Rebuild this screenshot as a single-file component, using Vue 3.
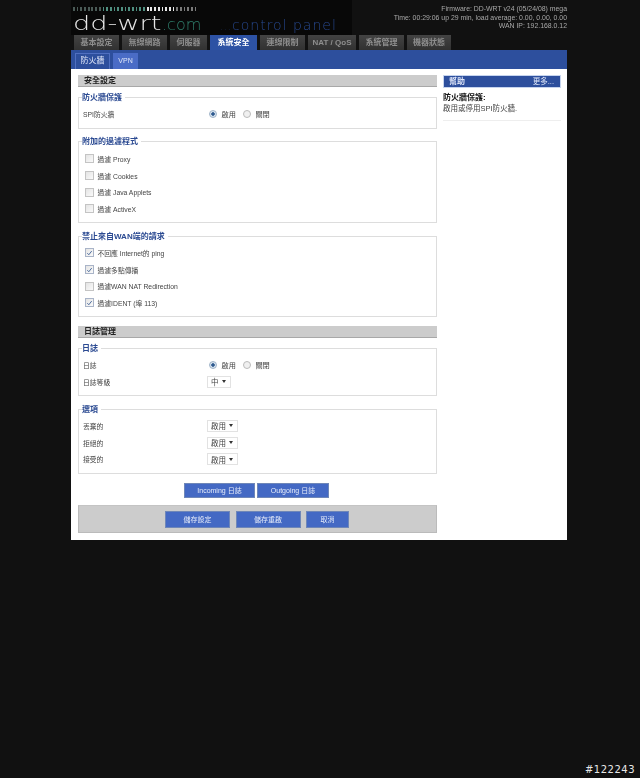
<script setup>
const ticks = Array.from({ length: 34 }, (_, i) => {
  if (i < 8) return '#4a5a56'
  if (i < 20) return '#4f8f80'
  if (i < 28) return '#e8e8e8'
  return '#7a7a7a'
})
const tabs = [
  { t: '基本設定', w: 45 }, { t: '無線網路', w: 45 }, { t: '伺服器', w: 37 },
  { t: '系統安全', w: 47, on: true }, { t: '連線限制', w: 45 }, { t: 'NAT / QoS', w: 48 },
  { t: '系統管理', w: 45 }, { t: '機器狀態', w: 44 },
]
const filters = ['Proxy', 'Cookies', 'Java Applets', 'ActiveX']
const wan = [
  { t: '不回應 Internet的 ping', on: true }, { t: '過濾多點傳播', on: true },
  { t: '過濾WAN NAT Redirection', on: false }, { t: '過濾IDENT (埠 113)', on: true },
]
const opts = ['丟棄的', '拒絕的', '接受的']
</script>

<template>
  <div class="page">
    <div class="wrap">
      <header class="top">
        <div class="logo">
          <div class="ticks">
            <i v-for="(c, i) in ticks" :key="i" :style="{ background: c }"></i>
          </div>
          <div class="brand">
            <span class="ddbox"><span class="dd">dd-wrt</span></span><span class="com">.com</span>
            <span class="cp"><span class="dots">...</span>control panel</span>
          </div>
        </div>
        <div class="info">
          <div>Firmware: DD-WRT v24 (05/24/08) mega</div>
          <div>Time: 00:29:06 up 29 min, load average: 0.00, 0.00, 0.00</div>
          <div>WAN IP: 192.168.0.12</div>
        </div>
      </header>
      <nav class="tabs">
        <span v-for="tab in tabs" :key="tab.t" class="tab" :class="{ on: tab.on }" :style="{ width: tab.w + 'px' }">{{ tab.t }}</span>
      </nav>
      <div class="subbar">
        <span class="sub cur">防火牆</span>
        <span class="sub vpn">VPN</span>
      </div>
      <main class="body">
        <section class="left">
          <h2 class="head">安全設定</h2>
          <fieldset class="fs f1">
            <legend>防火牆保護</legend>
            <div class="row">
              <span class="lab">SPI防火牆</span>
              <span class="radio on"></span><span class="rt">啟用</span>
              <span class="radio"></span><span class="rt">關閉</span>
            </div>
          </fieldset>
          <fieldset class="fs f2">
            <legend>附加的過濾程式</legend>
            <div v-for="f in filters" :key="f" class="row chk">
              <span class="box"></span><span>過濾 {{ f }}</span>
            </div>
          </fieldset>
          <fieldset class="fs f3">
            <legend>禁止來自WAN端的請求</legend>
            <div v-for="w in wan" :key="w.t" class="row chk">
              <span class="box" :class="{ tick: w.on }">
                <svg v-if="w.on" viewBox="0 0 8 8" width="8" height="8"><path d="M1.5 4.2 3.2 6 6.5 1.8" fill="none" stroke="#4a6a9c" stroke-width="1.1" /></svg>
              </span><span>{{ w.t }}</span>
            </div>
          </fieldset>
          <h2 class="head h2">日誌管理</h2>
          <fieldset class="fs f4">
            <legend>日誌</legend>
            <div class="row">
              <span class="lab">日誌</span>
              <span class="radio on"></span><span class="rt">啟用</span>
              <span class="radio"></span><span class="rt">關閉</span>
            </div>
            <div class="row">
              <span class="lab sel-lab">日誌等級</span>
              <span class="sel small">中<b></b></span>
            </div>
          </fieldset>
          <fieldset class="fs f5">
            <legend>選項</legend>
            <div v-for="o in opts" :key="o" class="row">
              <span class="lab sel-lab">{{ o }}</span>
              <span class="sel">啟用<b></b></span>
            </div>
          </fieldset>
          <div class="logbtns">
            <span class="btn b1">Incoming 日誌</span>
            <span class="btn b2">Outgoing 日誌</span>
          </div>
          <div class="actions">
            <span class="btn a1">儲存設定</span>
            <span class="btn a1">儲存重啟</span>
            <span class="btn a2">取消</span>
          </div>
        </section>
        <aside class="help">
          <div class="hhead"><b>幫助</b><span>更多...</span></div>
          <div class="htitle">防火牆保護:</div>
          <div class="htext">啟用或停用SPI防火牆.</div>
        </aside>
      </main>
    </div>
    <span class="mark">#122243</span>
  </div>
</template>

<style scoped>
.page {
  position: relative;
  height: 778px;
  background: #111;
  overflow: hidden;
  font-family: "Liberation Sans", "Noto Sans CJK TC", sans-serif;
  font-size: 7px;
  color: #444;
}
.wrap { margin-left: 71px; width: 496px; filter: blur(0.4px); }
.top { display: flex; justify-content: space-between; height: 35px; }
.logo {
  width: 281px;
  height: 35px;
  background: #080808;
  box-sizing: border-box;
  padding: 7px 0 0 2px;
}
.ticks { display: flex; gap: 1.9px; height: 4px; }
.ticks i { width: 1.8px; height: 4px; display: block; }
.brand { display: flex; align-items: baseline; height: 21px; margin-top: 2px; white-space: nowrap; }
.ddbox { display: inline-block; width: 89px; }
.dd {
  display: inline-block;
  font-family: "DejaVu Sans", sans-serif;
  font-weight: 200;
  font-size: 20px;
  line-height: 21px;
  color: #e6e6e6;
  transform: scaleX(1.36);
  transform-origin: left bottom;
}
.com {
  font-family: "DejaVu Sans", sans-serif;
  font-size: 16px;
  font-weight: 200;
  color: #2f7f6c;
  width: 39px;
}
.cp {
  font-family: "DejaVu Sans", sans-serif;
  font-size: 14px;
  font-weight: 200;
  color: #27488f;
  letter-spacing: 1px;
  margin-left: 19px;
}
.dots { font-size: 9px; display: inline-block; width: 12px; }
.info {
  text-align: right;
  color: #a9a9a9;
  font-size: 6.9px;
  line-height: 8.6px;
  padding-top: 5px;
  white-space: nowrap;
  font-family: "Liberation Sans", sans-serif;
}
.tabs { display: flex; gap: 3px; padding-left: 3px; height: 15px; }
.tab {
  box-sizing: border-box;
  background: linear-gradient(#434343, #313131);
  color: #8e8e8e;
  font-size: 8px;
  font-weight: 700;
  text-align: center;
  line-height: 16px;
  white-space: nowrap;
}
.tab.on { background: #2d52a4; color: #fff; }
.subbar {
  display: flex;
  gap: 3px;
  height: 19px;
  background: #2d4f9d;
  padding: 3px 0 0 4px;
  box-sizing: border-box;
}
.sub {
  font-size: 8px;
  line-height: 16px;
  text-align: center;
  color: #dfe6f8;
  box-sizing: border-box;
}
.cur { width: 35px; background: #2d4f9d; border: 1px solid #4f6fc0; border-bottom: 0; line-height: 14px; }
.vpn { width: 25px; background: #4a6cc6; font-size: 7px; }
.body {
  background: #fff;
  height: 471px;
  display: flex;
  padding: 6px 6px 0 7px;
  box-sizing: border-box;
  gap: 6px;
}
.left { width: 359px; }
.head {
  margin: 0;
  height: 12px;
  background: #ccc;
  border-bottom: 1px solid #a8a8a8;
  box-sizing: border-box;
  font-size: 8px;
  font-weight: 700;
  line-height: 12px;
  padding-left: 6px;
  color: #222;
}
.h2 { margin-top: 9px; }
.fs {
  margin: 0;
  padding: 0 0 0 7px;
  border: 1px solid #ddd;
  box-sizing: border-box;
  min-width: 0;
}
.fs legend {
  padding: 0 3px 0 0;
  margin-left: -4px;
  font-size: 8px;
  font-weight: 700;
  line-height: 9px;
  color: #2b4a92;
}
.f1 { height: 36px; margin-top: 6px; }
.f2 { height: 86px; margin-top: 8px; }
.f3 { height: 85px; margin-top: 9px; }
.f4 { height: 52px; margin-top: 6px; }
.f5 { height: 69px; margin-top: 9px; }
.f1 .row:first-of-type { margin-top: 3.7px; }
.f2 .row:first-of-type { margin-top: 4.7px; }
.f3 .row:first-of-type { margin-top: 3.7px; }
.f4 .row:first-of-type { margin-top: 3.7px; }
.f5 .row:first-of-type { margin-top: 3.7px; }
.row {
  display: flex;
  align-items: center;
  height: 16.6px;
  font-size: 6.8px;
  white-space: nowrap;
}
.lab { width: 126px; margin-left: -3px; flex: none; }
.sel-lab { width: 124px; }
.chk { gap: 3.5px; }
.box {
  width: 9px;
  height: 9px;
  box-sizing: border-box;
  border: 1px solid #c4c4c4;
  background: linear-gradient(135deg, #e4e4e4, #fafafa);
  flex: none;
  margin-left: -1px;
  display: flex;
  align-items: center;
  justify-content: center;
}
.tick { border-color: #a9b4c8; }
.radio {
  width: 8px;
  height: 8px;
  border-radius: 50%;
  border: 1px solid #bbb;
  box-sizing: border-box;
  background: #f0f0f0;
  flex: none;
}
.radio.on {
  background: radial-gradient(circle, #2f5a8f 0 35%, #d6e2ee 45%);
  border-color: #9fb3c8;
}
.rt { margin: 0 7px 0 4.5px; font-size: 7.2px; }
.sel {
  width: 31px;
  height: 12px;
  box-sizing: border-box;
  border: 1px solid #e2e2e2;
  display: flex;
  align-items: center;
  justify-content: space-between;
  padding: 0 4px 0 3px;
  font-size: 7.5px;
}
.sel.small { width: 24px; }
.sel b {
  width: 0;
  height: 0;
  border-left: 2.5px solid transparent;
  border-right: 2.5px solid transparent;
  border-top: 3px solid #333;
}
.btn {
  box-sizing: border-box;
  display: block;
  height: 15px;
  background: #4469c4;
  border: 1px solid #6f87b8;
  color: #e6ecfa;
  font-size: 7px;
  line-height: 13px;
  text-align: center;
  white-space: nowrap;
}
.logbtns { display: flex; justify-content: center; gap: 2px; margin-top: 9px; padding-right: 2px; }
.b1 { width: 71px; }
.b2 { width: 72px; }
.actions {
  display: flex;
  justify-content: center;
  gap: 5.5px;
  margin-top: 7px;
  height: 28px;
  padding: 5px 1px 0 0;
  box-sizing: border-box;
  background: #ccc;
  border: 1px solid #bbb;
  border-top-color: #c4c4c4;
}
.a1, .a2 { height: 17px; line-height: 15px; }
.a1 { width: 65px; }
.a2 { width: 43px; }
.help { width: 118px; }
.hhead {
  display: flex;
  justify-content: space-between;
  height: 13px;
  background: #2d4f9d;
  border: 1px solid #c6d4ee;
  box-sizing: border-box;
  color: #dfe6f8;
  font-size: 8px;
  line-height: 11px;
  padding: 0 6px 0 5px;
}
.hhead span { font-size: 7.5px; }
.htitle { margin-top: 4px; font-size: 8px; font-weight: 700; color: #111; line-height: 11px; }
.htext {
  font-size: 7.5px;
  line-height: 11px;
  padding-bottom: 6px;
  border-bottom: 1px solid #eee;
  color: #444;
}
.mark {
  position: absolute;
  right: 5px;
  bottom: 2px;
  font-family: "DejaVu Sans", sans-serif;
  font-size: 10px;
  line-height: 12px;
  color: #e8e8e8;
  letter-spacing: 0.5px;
}
</style>

<style>
html, body { background: #111; }
</style>
